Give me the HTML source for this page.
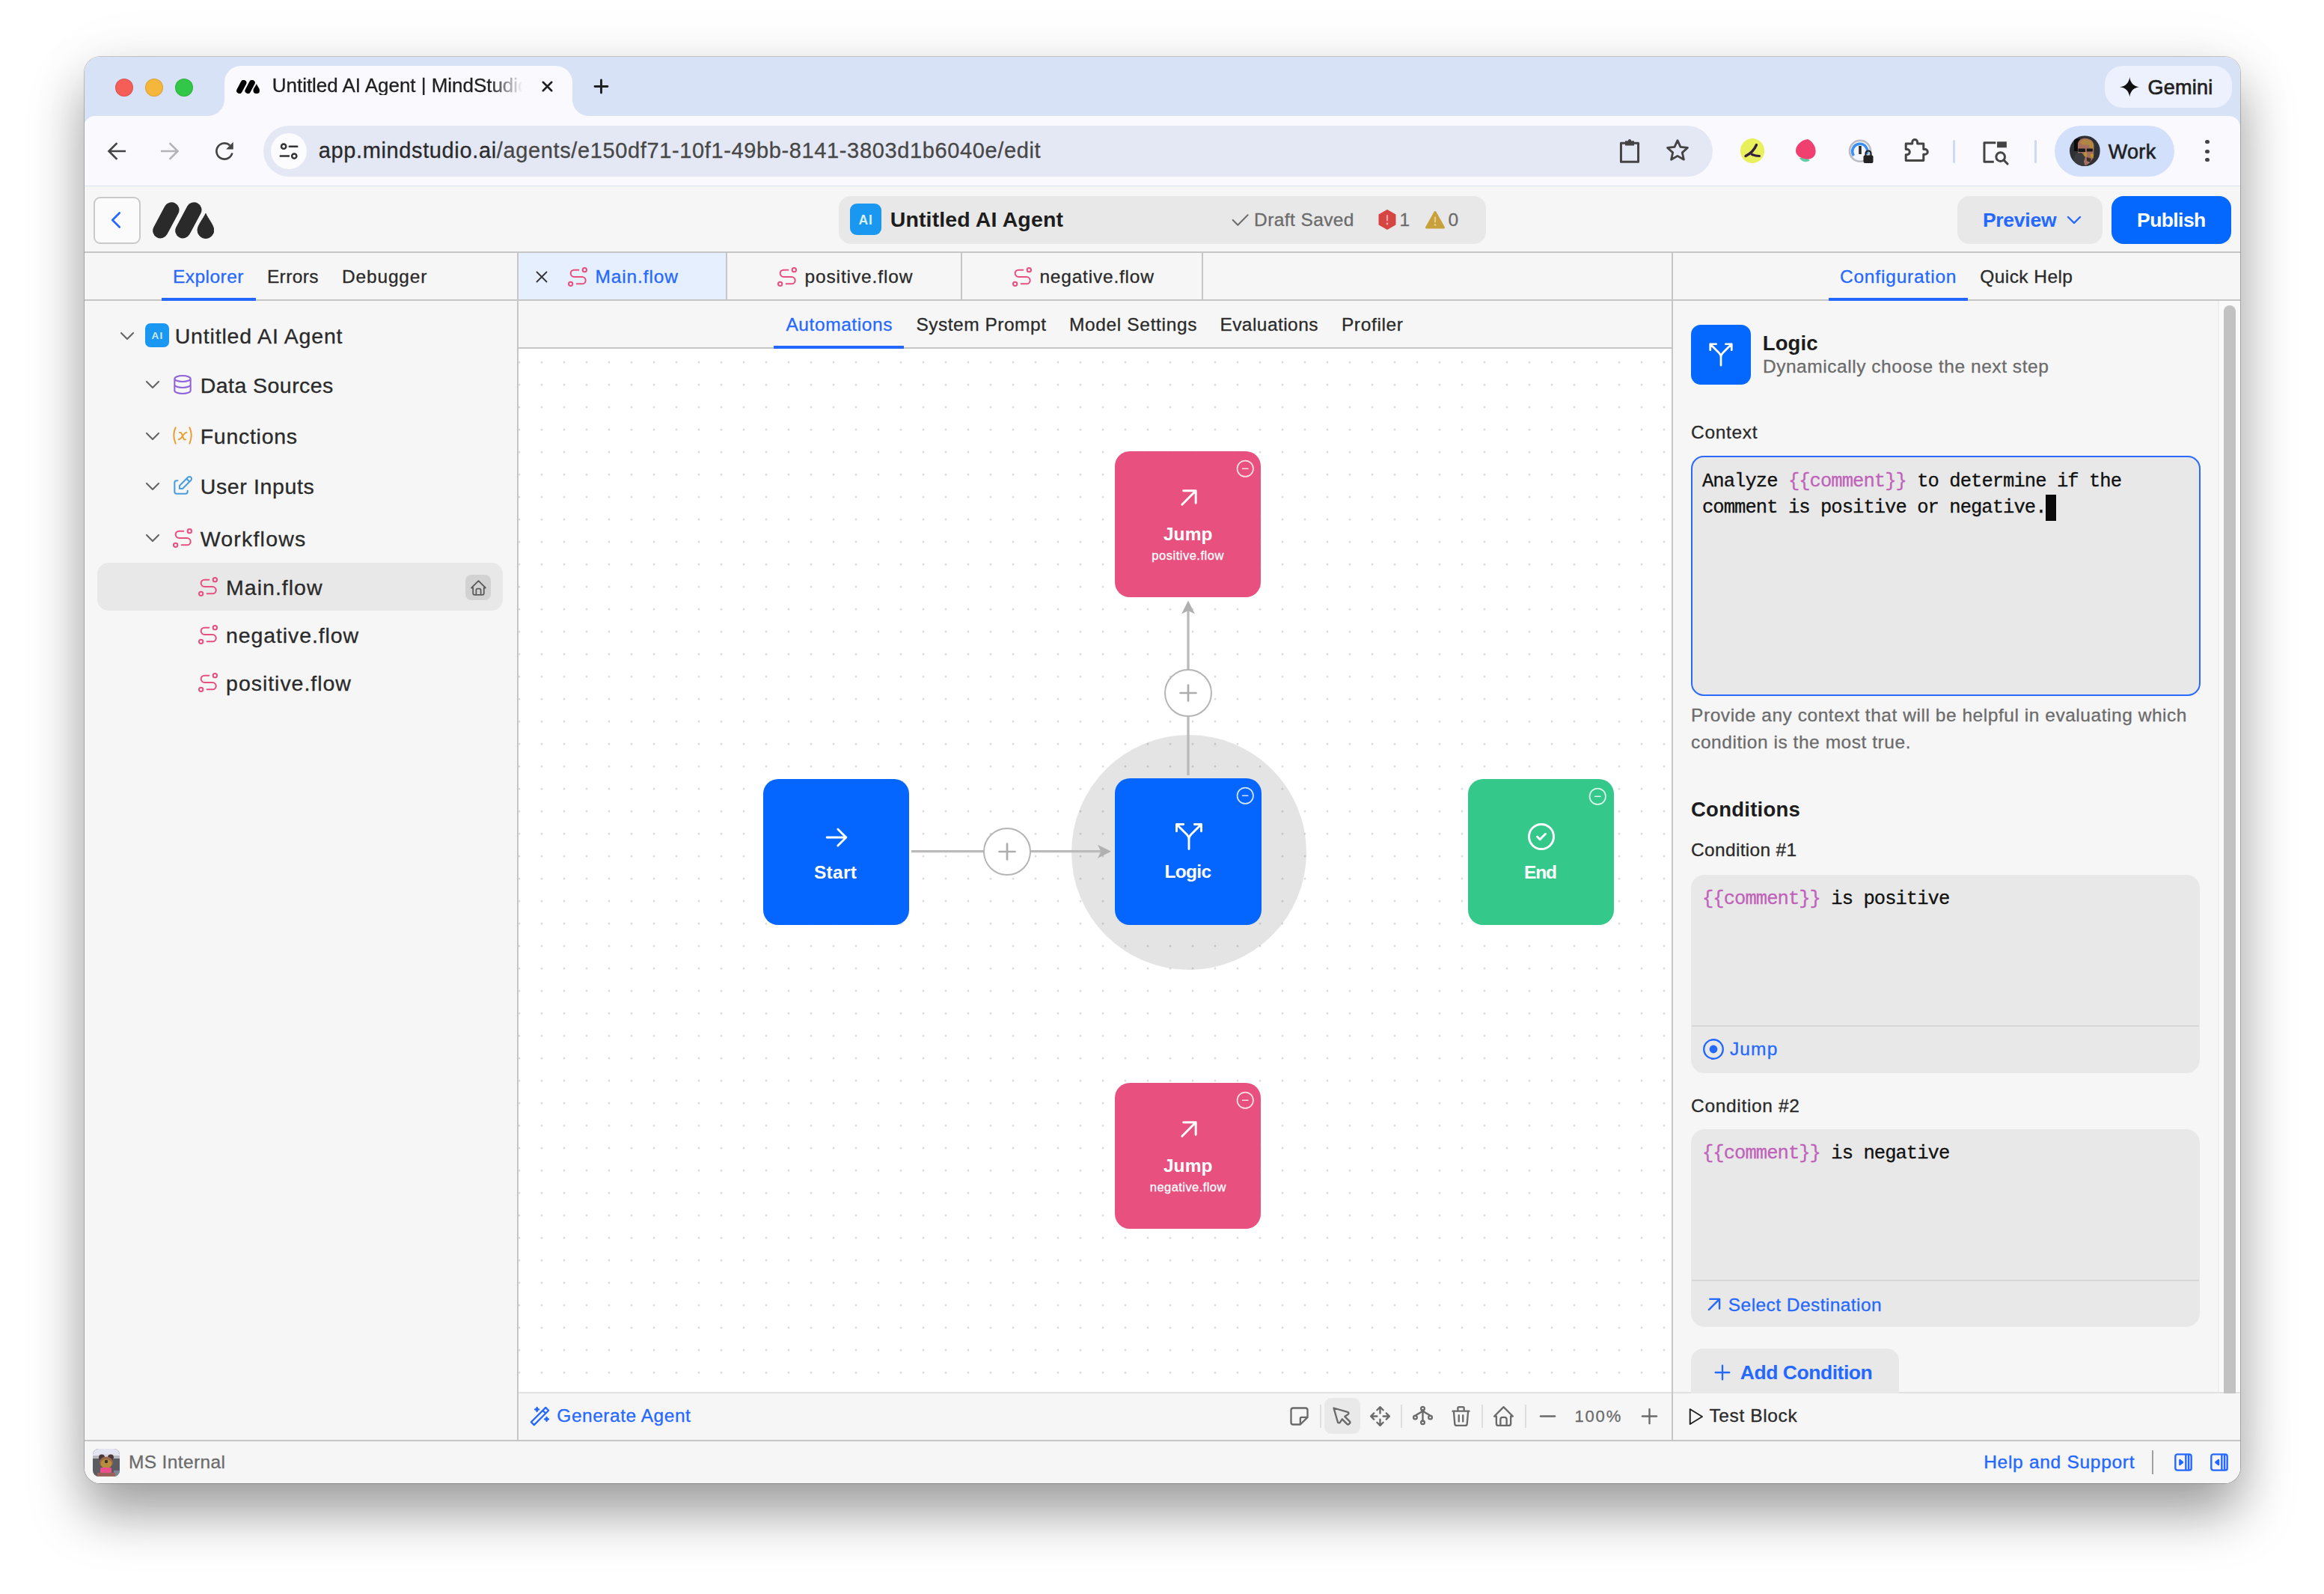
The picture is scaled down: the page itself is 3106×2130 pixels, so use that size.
<!DOCTYPE html>
<html lang="en">
<head>
<meta charset="utf-8">
<title>Untitled AI Agent | MindStudio</title>
<style>
html,body{margin:0;padding:0;}
body{width:3106px;height:2130px;background:#fff;overflow:hidden;position:relative;font-family:"Liberation Sans",sans-serif;}
#shadow{position:absolute;left:113px;top:76px;width:2881px;height:1906px;border-radius:21px;
 box-shadow:0 0 0 1px rgba(0,0,0,.2),0 40px 70px rgba(0,0,0,.37),0 0 90px rgba(0,0,0,.05);}
#win{position:absolute;left:113px;top:76px;width:2881px;height:1906px;border-radius:21px;overflow:hidden;background:#f6f6f6;}
#pg{position:absolute;left:-113px;top:-76px;width:3106px;height:2130px;}
.t{position:absolute;white-space:nowrap;line-height:1;-webkit-text-stroke:.3px;}
.b{position:absolute;box-sizing:border-box;}
.i{position:absolute;overflow:visible;stroke:currentColor;stroke-linecap:round;stroke-linejoin:round;}
.v{color:#c062ba;}
</style>
</head>
<body>
<svg width="0" height="0" style="position:absolute">
<defs>
<symbol id="chev-d" viewBox="0 0 24 24"><path d="M6 9l6 6l6 -6"/></symbol>
<symbol id="chev-l" viewBox="0 0 24 24"><path d="M15 6l-6 6l6 6"/></symbol>
<symbol id="x" viewBox="0 0 24 24"><path d="M18 6l-12 12M6 6l12 12"/></symbol>
<symbol id="plus" viewBox="0 0 24 24"><path d="M12 5v14M5 12h14"/></symbol>
<symbol id="minus" viewBox="0 0 24 24"><path d="M5 12h14"/></symbol>
<symbol id="check" viewBox="0 0 24 24"><path d="M5 12l5 5l10 -10"/></symbol>
<symbol id="arrow-r" viewBox="0 0 24 24"><path d="M5 12h14M13 18l6 -6M13 6l6 6"/></symbol>
<symbol id="arrow-l" viewBox="0 0 24 24"><path d="M19 12h-14M11 18l-6 -6M11 6l-6 6"/></symbol>
<symbol id="arrow-ur" viewBox="0 0 24 24"><path d="M17 7l-10 10M8 7h9v9"/></symbol>
<symbol id="fork" viewBox="0 0 24 24"><path d="M16 3h5v5M8 3h-5v5M21 3l-7.536 7.536a5 5 0 0 0 -1.464 3.534v6.93M3 3l7.536 7.536a5 5 0 0 1 1.464 3.534v.93"/></symbol>
<symbol id="c-check" viewBox="0 0 24 24"><circle cx="12" cy="12" r="9"/><path d="M9 12l2 2l4 -4"/></symbol>
<symbol id="c-minus" viewBox="0 0 24 24"><circle cx="12" cy="12" r="9"/><path d="M9 12h6"/></symbol>
<symbol id="c-dot" viewBox="0 0 24 24"><circle cx="12" cy="12" r="9"/><circle cx="12" cy="12" r="3.800" fill="currentColor" stroke="none"/></symbol>
<symbol id="db" viewBox="0 0 24 24"><path d="M4 6a8 3 0 1 0 16 0a8 3 0 1 0 -16 0M4 6v6a8 3 0 0 0 16 0v-6M4 12v6a8 3 0 0 0 16 0v-6"/></symbol>
<symbol id="var" viewBox="0 0 24 24"><path d="M5 4c-2.500 5 -2.500 10 0 16m14 -16c2.500 5 2.500 10 0 16m-10 -11h1c1 0 1 1 2.016 3.527c.984 2.473 .984 3.473 1.984 3.473h1M8 16c1.500 0 3 -2 4 -3.500s2.500 -3.500 4 -3.500"/></symbol>
<symbol id="edit" viewBox="0 0 24 24"><path d="M7 7h-1a2 2 0 0 0 -2 2v9a2 2 0 0 0 2 2h9a2 2 0 0 0 2 -2v-1M20.385 6.585a2.100 2.100 0 0 0 -2.970 -2.970l-8.415 8.385v3h3l8.385 -8.415zM16 5l3 3"/></symbol>
<symbol id="route" viewBox="0 0 24 24"><path d="M3 19a2 2 0 1 0 4 0a2 2 0 0 0 -4 0M19 7a2 2 0 1 0 0 -4a2 2 0 0 0 0 4zM11 19h5.500a3.500 3.500 0 0 0 0 -7h-8a3.500 3.500 0 0 1 0 -7h4.500"/></symbol>
<symbol id="home" viewBox="0 0 24 24"><path d="M5 12l-2 0l9 -9l9 9l-2 0M5 12v7a2 2 0 0 0 2 2h10a2 2 0 0 0 2 -2v-7M9 21v-6a2 2 0 0 1 2 -2h2a2 2 0 0 1 2 2v6"/></symbol>
<symbol id="trash" viewBox="0 0 24 24"><path d="M4 7l16 0M10 11l0 6M14 11l0 6M5 7l1 12a2 2 0 0 0 2 2h8a2 2 0 0 0 2 -2l1 -12M9 7v-3a1 1 0 0 1 1 -1h4a1 1 0 0 1 1 1v3"/></symbol>
<symbol id="pointer" viewBox="0 0 24 24"><path d="M7.904 17.563a1.200 1.200 0 0 0 2.228 .308l2.090 -3.093l4.907 4.907a1.067 1.067 0 0 0 1.509 0l1.047 -1.047a1.067 1.067 0 0 0 0 -1.509l-4.907 -4.907l3.113 -2.090a1.200 1.200 0 0 0 -.309 -2.228l-13.582 -3.904l3.904 13.563z"/></symbol>
<symbol id="move" viewBox="0 0 24 24"><path d="M18 9l3 3l-3 3M15 12h6M6 9l-3 3l3 3M3 12h6M9 18l3 3l3 -3M12 15v6M15 6l-3 -3l-3 3M12 3v6"/></symbol>
<symbol id="wand" viewBox="0 0 24 24"><path d="M6 21l15 -15l-3 -3l-15 15l3 3M15 6l3 3M9 3a2 2 0 0 0 2 2a2 2 0 0 0 -2 2a2 2 0 0 0 -2 -2a2 2 0 0 0 2 -2M19 13a2 2 0 0 0 2 2a2 2 0 0 0 -2 2a2 2 0 0 0 -2 -2a2 2 0 0 0 2 -2"/></symbol>
<symbol id="play" viewBox="0 0 24 24"><path d="M7 4v16l13 -8z"/></symbol>
<symbol id="note" viewBox="0 0 24 24"><path d="M13 20l7 -7M13 20v-6a1 1 0 0 1 1 -1h6v-7a2 2 0 0 0 -2 -2h-12a2 2 0 0 0 -2 2v12a2 2 0 0 0 2 2h7"/></symbol>
<symbol id="tree" viewBox="0 0 24 24"><circle cx="12" cy="5.200" r="1.700"/><circle cx="12" cy="18.800" r="1.700"/><circle cx="4.700" cy="13.800" r="1.700"/><circle cx="19.300" cy="13.800" r="1.700"/><path d="M12 6.900v10.200M11.700 6.900c-.8 3.400 -5.600 2.800 -6.600 5.300M12.300 6.900c.8 3.400 5.600 2.800 6.600 5.300"/></symbol>
<symbol id="sb-r1" viewBox="0 0 24 24"><path d="M4 6a2 2 0 0 1 2 -2h12a2 2 0 0 1 2 2v12a2 2 0 0 1 -2 2h-12a2 2 0 0 1 -2 -2zM14.500 4v16M17.300 4v16"/><path d="M8.500 9.800l2.800 2.200l-2.800 2.200z" fill="currentColor"/></symbol>
<symbol id="sb-r2" viewBox="0 0 24 24"><path d="M4 6a2 2 0 0 1 2 -2h12a2 2 0 0 1 2 2v12a2 2 0 0 1 -2 2h-12a2 2 0 0 1 -2 -2zM14.500 4v16M17.300 4v16"/><path d="M11.300 9.800l-2.800 2.200l2.800 2.200z" fill="currentColor"/></symbol>
<symbol id="reload" viewBox="0 0 24 24"><path d="M19.300 13.800a7.500 7.500 0 1 1 -2.200 -7.300" stroke-linecap="butt"/><path d="M20.300 3.400v6.800h-6.800z" fill="currentColor" stroke="none"/></symbol>
<symbol id="tune" viewBox="0 0 24 24"><path d="M12.600 6.900h8.400M3 17.200h9"/><circle cx="6.500" cy="6.900" r="2.500"/><circle cx="17.800" cy="17.200" r="2.500"/></symbol>
<symbol id="nav-l" viewBox="0 0 24 24"><path d="M20.500 12h-15.500M12.300 4.300l-7.700 7.700l7.700 7.700" stroke-linecap="butt" stroke-linejoin="miter"/></symbol>
<symbol id="nav-r" viewBox="0 0 24 24"><path d="M3.500 12h15.500M11.700 4.300l7.700 7.700l-7.700 7.700" stroke-linecap="butt" stroke-linejoin="miter"/></symbol>
<symbol id="clip" viewBox="0 0 24 24"><path d="M8 4.800h-3.700v16.700h15.400v-16.700h-3.700" stroke-linecap="butt" stroke-linejoin="round"/><path d="M8 2.800h8v4.200h-8z" fill="currentColor" stroke="none"/><circle cx="12" cy="2.700" r="1.400" fill="currentColor" stroke="none"/></symbol>
<symbol id="star" viewBox="0 0 24 24"><path d="M12 3.600l2.500 5.500l6 .65l-4.500 4.050l1.300 5.900l-5.300 -3.050l-5.300 3.050l1.300 -5.900l-4.500 -4.050l6 -.65z"/></symbol>
<symbol id="puzzle" viewBox="0 0 24 24"><path d="M4.800 7h5v-1.200a2 2 0 0 1 4 0v1.200h4.800v4.400h1.200a2 2 0 0 1 0 4h-1.200v4.800h-13.800v-4.600h.9a2.100 2.100 0 0 0 0 -4.200h-.9z" stroke-linejoin="round"/></symbol>
<symbol id="media" viewBox="0 0 24 24"><path d="M11 19.500h-7.500v-15h9" stroke-linecap="butt" stroke-linejoin="round"/><path d="M13.500 3.700h7.500v4.600h-7.500z" fill="currentColor" stroke="none"/><circle cx="16.200" cy="15.600" r="3.400"/><path d="M18.700 18.100l3 3"/></symbol>
<symbol id="logo" viewBox="0 0 82 49"><path d="M10.400 38.300l14.900 -27.900M40.400 38.300l14.900 -27.900" stroke="currentColor" stroke-width="20.400" stroke-linecap="round" fill="none"/><path d="M70.900 15.300c-2.600 6.400 -10.900 15.500 -10.900 22.300a10.900 10.900 0 0 0 21.800 0c0 -6.800 -8.300 -15.900 -10.900 -22.300z" fill="currentColor" stroke="currentColor" stroke-width="1" stroke-linejoin="round"/></symbol>
</defs>
</svg>
<div id="shadow"></div>
<div id="win"><div id="pg">
<div class="b" style="left:112.0px;top:75.0px;width:2882.0px;height:105.0px;background:#d8e2f6;"></div>
<div class="b" style="left:153.8px;top:104.6px;width:24.4px;height:24.4px;border-radius:50%;background:#f55d57;box-shadow:inset 0 0 0 1px rgba(0,0,0,.12);"></div>
<div class="b" style="left:193.8px;top:104.6px;width:24.4px;height:24.4px;border-radius:50%;background:#f5b63c;box-shadow:inset 0 0 0 1px rgba(0,0,0,.12);"></div>
<div class="b" style="left:233.8px;top:104.6px;width:24.4px;height:24.4px;border-radius:50%;background:#33c748;box-shadow:inset 0 0 0 1px rgba(0,0,0,.12);"></div>
<div class="b" style="left:112.0px;top:155.0px;width:2882.0px;height:95.0px;background:#f9f9fe;border-radius:15px 15px 0 0;border-bottom:2px solid #dfe3f0;"></div>
<div class="b" style="left:300.0px;top:88.0px;width:465.0px;height:69.0px;background:#f9f9fe;border-radius:22px 22px 0 0;"></div>
<svg class="b" style="left:278px;top:133px;width:22px;height:22px" viewBox="0 0 22 22"><path d="M22 0v22h-22a22 22 0 0 0 22 -22z" fill="#f9f9fe"/></svg>
<svg class="b" style="left:765px;top:133px;width:22px;height:22px" viewBox="0 0 22 22"><path d="M0 0v22h22a22 22 0 0 1 -22 -22z" fill="#f9f9fe"/></svg>
<svg class="b" style="left:316px;top:106px;width:31px;height:20px" viewBox="0 0 82 49"><use href="#logo"/></svg>
<span class="t" id="tabtitle" style="left:363.8px;top:101px;font-size:26px;color:#1f1f1f;letter-spacing:-0.029px;width:338px;overflow:hidden;-webkit-mask-image:linear-gradient(90deg,#000 86%,transparent 99%);mask-image:linear-gradient(90deg,#000 86%,transparent 99%);">Untitled AI Agent | MindStudio</span>
<svg class="i" style="left:720.2px;top:104.0px;width:23px;height:23px;color:#1f1f1f;stroke-width:2.7;fill:none;"><use href="#x"/></svg>
<svg class="i" style="left:788.8px;top:101.0px;width:29px;height:29px;color:#1f1f1f;stroke-width:2.4;fill:none;"><use href="#plus"/></svg>
<div class="b" style="left:2813.4px;top:87.7px;width:169.6px;height:56.3px;background:#edf1fd;border-radius:24px;"></div>
<svg class="b" style="left:2832.700px;top:102.900px;width:26.500px;height:26.500px" viewBox="0 0 24 24"><path d="M12 0c.7 6.600 4.700 11.300 12 12c-7.300 .7 -11.300 5.400 -12 12c-.7 -6.600 -4.700 -11.300 -12 -12c7.300 -.7 11.300 -5.400 12 -12z" fill="#111"/></svg>
<span class="t" id="gemini" style="left:2870.4px;top:104px;font-size:27px;color:#1f1f1f;letter-spacing:0.245px;-webkit-text-stroke:.7px #1f1f1f;">Gemini</span>
<svg class="i" style="left:139.0px;top:185.2px;width:34px;height:34px;color:#444;stroke-width:1.9;fill:none;"><use href="#nav-l"/></svg>
<svg class="i" style="left:210.4px;top:185.2px;width:34px;height:34px;color:#b3b3b8;stroke-width:1.9;fill:none;"><use href="#nav-r"/></svg>
<svg class="i" style="left:283.3px;top:185.2px;width:34px;height:34px;color:#444;stroke-width:1.9;fill:none;"><use href="#reload"/></svg>
<div class="b" style="left:352.3px;top:168.2px;width:1936.7px;height:67.4px;background:#e4e7f4;border-radius:34px;"></div>
<div class="b" style="left:361.7px;top:178.0px;width:48.0px;height:48.0px;background:#fcfcff;border-radius:50%;"></div>
<svg class="i" style="left:370.5px;top:187.0px;width:30px;height:30px;color:#333;stroke-width:2;fill:none;"><use href="#tune"/></svg>
<span class="t" id="url" style="left:425.7px;top:187px;font-size:29px;color:#2a2a2a;letter-spacing:0.630px;">app.mindstudio.ai<span style="color:#474747">/agents/e150df71-10f1-49bb-8141-3803d1b6040e/edit</span></span>
<svg class="i" style="left:2159.9px;top:184.3px;width:36px;height:36px;color:#444;stroke-width:2;fill:none;"><use href="#clip"/></svg>
<svg class="i" style="left:2223.0px;top:182.2px;width:38px;height:38px;color:#444;stroke-width:1.8;fill:none;"><use href="#star"/></svg>
<div class="b" style="left:2325.7px;top:185.4px;width:32.7px;height:32.7px;background:#e8f05c;border-radius:50%;"></div>
<svg class="b" style="left:2326px;top:186px;width:32px;height:32px" viewBox="0 0 32 32"><path d="M21.500 7.500c-3 7 -8 12 -14.500 15" stroke="#33203f" stroke-width="3.400" fill="none" stroke-linecap="round"/><path d="M15.500 20.500c3.500 1.500 7 2 10 2" stroke="#33203f" stroke-width="3" fill="none" stroke-linecap="round"/></svg>
<svg class="b" style="left:2397px;top:184px;width:32px;height:36px" viewBox="0 0 32 36"><path d="M8 27.500c3 5 10 6 13.500 3c-2 -3.500 -9 -5 -13.500 -3z" fill="#5fd0a5"/><path d="M19 2c7 3 11.500 11 10.500 18c-.8 6 -6 9.500 -12.500 8.500c-8 -1 -14 -5 -14 -11c0 -7 7 -14.500 16 -15.500z" fill="#f04070"/></svg>
<svg class="b" style="left:2468px;top:183px;width:40px;height:40px" viewBox="0 0 40 40"><circle cx="18" cy="18.700" r="14" fill="#f4f6fd" stroke="#b9bcc4" stroke-width="2.600"/><path d="M9.500 25a10 10 0 1 1 17.500 -2" stroke="#3b8ff0" stroke-width="3.600" fill="none"/><path d="M18 12v11" stroke="#2a2a2a" stroke-width="3.600"/><rect x="22.500" y="24.500" width="13" height="10.500" rx="2" fill="#222"/><path d="M25.500 25v-3a3.500 3.500 0 0 1 7 0v3" stroke="#222" stroke-width="2.200" fill="none"/></svg>
<svg class="i" style="left:2539.3px;top:180.1px;width:41px;height:41px;color:#444;stroke-width:1.75;fill:none;"><use href="#puzzle"/></svg>
<div class="b" style="left:2610.3px;top:186.5px;width:3.0px;height:31.2px;background:#cdd9f7;border-radius:1.500px;"></div>
<svg class="i" style="left:2646.0px;top:182.5px;width:41px;height:41px;color:#444;stroke-width:1.75;fill:none;"><use href="#media"/></svg>
<div class="b" style="left:2718.5px;top:186.5px;width:3.0px;height:31.2px;background:#cdd9f7;border-radius:1.500px;"></div>
<div class="b" style="left:2746.0px;top:167.8px;width:160.0px;height:68.0px;background:#d3e0fb;border-radius:34px;"></div>
<svg class="b" style="left:2765.800px;top:181.400px;width:40.800px;height:41.200px" viewBox="0 0 41 41"><defs><clipPath id="pfc"><circle cx="20.500" cy="20.500" r="20.500"/></clipPath></defs><g clip-path="url(#pfc)"><rect width="41" height="41" fill="#2e3033"/><path d="M6 4h8v17h-8z" fill="#0b0b0c"/><path d="M11 12c0 -6 5 -8.500 10 -8.500s11.500 3 11.500 9.500v11c0 6 -3 10 -6 13l-4.500 3h-7l-1 -9l-3 -7z" fill="#a66e5f"/><path d="M13.500 8l6 -3.500l9 2l4 5v7l-5 -1l-2 -5l-9.500 -.5z" fill="#b7962f" opacity=".6"/><path d="M11.500 17.500h9.500v4.500h-9.500zM23 17.500h8v4h-8z" fill="#17181a"/><path d="M19.500 22.500h3.500v6h-3.500zM28 24l4.500 1.500l-1 5.500l-3.500 -3z" fill="#b7962f"/><path d="M8 24l8 -1l5 6l-2 6l2 6h-12l-4 -9z" fill="#3a3b3e"/><path d="M23 29l6 2l-1 5l-5 -2z" fill="#3b3030"/></g></svg>
<span class="t" id="work" style="left:2817.7px;top:190px;font-size:27px;color:#1f1f1f;letter-spacing:0.313px;-webkit-text-stroke:.6px #1f1f1f;">Work</span>
<div class="b" style="left:2947.3px;top:186.9px;width:5.4px;height:5.4px;background:#444;border-radius:50%;"></div>
<div class="b" style="left:2947.3px;top:199.5px;width:5.4px;height:5.4px;background:#444;border-radius:50%;"></div>
<div class="b" style="left:2947.3px;top:210.7px;width:5.4px;height:5.4px;background:#444;border-radius:50%;"></div>
<div class="b" style="left:112.0px;top:249.0px;width:2882.0px;height:1733.0px;background:#f6f6f6;"></div>
<div class="b" style="left:124.5px;top:262.5px;width:63.0px;height:63.0px;background:#fbfbfb;border:2px solid #c9c9c9;border-radius:9px;"></div>
<svg class="i" style="left:136.0px;top:275.0px;width:38px;height:38px;color:#2468ff;stroke-width:1.7;fill:none;"><use href="#chev-l"/></svg>
<svg class="b" style="left:204px;top:269.500px;width:82px;height:49px;color:#2a2a2a" viewBox="0 0 82 49"><use href="#logo"/></svg>
<div class="b" style="left:1120.6px;top:262.0px;width:865.4px;height:64.0px;background:#e8e8e8;border-radius:16px;"></div>
<div class="b" style="left:1136.0px;top:272.0px;width:42.2px;height:42.0px;background:#1a97f0;border-radius:9px;"></div>
<span class="t" id="ai1" style="left:1147.5px;top:286px;font-size:17.5px;font-weight:700;-webkit-text-stroke:0;color:#d9f0ff;letter-spacing:0.937px;">AI</span>
<span class="t" id="title" style="left:1189.7px;top:279px;font-size:28.5px;font-weight:700;-webkit-text-stroke:0;color:#1d1d1d;letter-spacing:0.139px;">Untitled AI Agent</span>
<svg class="i" style="left:1640.8px;top:277.8px;width:32px;height:32px;color:#6e6e6e;stroke-width:1.55;fill:none;"><use href="#check"/></svg>
<span class="t" id="draft" style="left:1676.1px;top:282px;font-size:24.5px;color:#6b6b6b;letter-spacing:0.402px;">Draft Saved</span>
<svg class="b" style="left:1841px;top:280px;width:26px;height:27px" viewBox="0 0 26 27"><path d="M13 1l10.500 6v13l-10.500 6l-10.500 -6v-13z" fill="#d64541" stroke="#d64541" stroke-width="2" stroke-linejoin="round"/><path d="M13 8v6.500" stroke="#f3a5a5" stroke-width="2.200" stroke-linecap="round"/><circle cx="13" cy="19" r="1.400" fill="#f3a5a5"/></svg>
<span class="t" id="errn" style="left:1870.4px;top:282px;font-size:24.5px;color:#6b6b6b;letter-spacing:0.000px;">1</span>
<svg class="b" style="left:1903.800px;top:280.500px;width:28px;height:26px" viewBox="0 0 28 26"><path d="M14 2.500l11.500 20.500h-23z" fill="#c8a03c" stroke="#c8a03c" stroke-width="3" stroke-linejoin="round"/><path d="M14 9.500v6" stroke="#e6cf8a" stroke-width="2.200" stroke-linecap="round"/><circle cx="14" cy="19.600" r="1.400" fill="#e6cf8a"/></svg>
<span class="t" id="warnn" style="left:1935.4px;top:282px;font-size:24.5px;color:#6b6b6b;letter-spacing:0.000px;">0</span>
<div class="b" style="left:2616.0px;top:262.0px;width:194.0px;height:64.0px;background:#e8e8e8;border-radius:16px;"></div>
<span class="t" id="preview" style="left:2649.9px;top:281px;font-size:26.5px;font-weight:700;-webkit-text-stroke:0;color:#2468ff;letter-spacing:-0.261px;">Preview</span>
<svg class="i" style="left:2756.1px;top:277.8px;width:32px;height:32px;color:#2468ff;stroke-width:1.8;fill:none;"><use href="#chev-d"/></svg>
<div class="b" style="left:2822.0px;top:262.0px;width:160.4px;height:64.0px;background:#0468ff;border-radius:16px;"></div>
<span class="t" id="publish" style="left:2856.1px;top:281px;font-size:26.5px;font-weight:700;-webkit-text-stroke:0;color:#fff;letter-spacing:-0.597px;">Publish</span>
<div class="b" style="left:112.0px;top:335.6px;width:2882.0px;height:2.0px;background:#c6c6c6;"></div>
<div class="b" style="left:112.0px;top:400.0px;width:2882.0px;height:2.0px;background:#c6c6c6;"></div>
<div class="b" style="left:692.0px;top:464.0px;width:1543.0px;height:2.0px;background:#c6c6c6;"></div>
<div class="b" style="left:692.0px;top:1859.8px;width:2302.0px;height:2.2px;background:#e1e1e1;"></div>
<div class="b" style="left:112.0px;top:1923.5px;width:2882.0px;height:2.0px;background:#c6c6c6;"></div>
<div class="b" style="left:690.5px;top:337.0px;width:2.0px;height:1587.0px;background:#c6c6c6;"></div>
<div class="b" style="left:2234.0px;top:337.0px;width:2.0px;height:1587.0px;background:#c6c6c6;"></div>
<span class="t" id="explorer" style="left:230.9px;top:358px;font-size:24.5px;color:#2468ff;letter-spacing:0.480px;">Explorer</span>
<div class="b" style="left:216.0px;top:397.5px;width:126.0px;height:4.0px;background:#2468ff;"></div>
<span class="t" id="errors" style="left:356.9px;top:358px;font-size:24.5px;color:#2a2a2a;letter-spacing:0.378px;">Errors</span>
<span class="t" id="debugger" style="left:456.9px;top:358px;font-size:24.5px;color:#2a2a2a;letter-spacing:0.855px;">Debugger</span>
<div class="b" style="left:692.5px;top:337.5px;width:278.5px;height:62.5px;background:#e6effd;"></div>
<div class="b" style="left:970.0px;top:337.5px;width:2.0px;height:62.5px;background:#c6c6c6;"></div>
<div class="b" style="left:1283.5px;top:337.5px;width:2.0px;height:62.5px;background:#c6c6c6;"></div>
<div class="b" style="left:1606.0px;top:337.5px;width:2.0px;height:62.5px;background:#c6c6c6;"></div>
<svg class="i" style="left:711.0px;top:357.0px;width:26px;height:26px;color:#333;stroke-width:1.7;fill:none;"><use href="#x"/></svg>
<svg class="i" style="left:755.8px;top:353.8px;width:32px;height:32px;color:#e8507f;stroke-width:1.55;fill:none;"><use href="#route"/></svg>
<span class="t" id="tab_main" style="left:795.4px;top:358px;font-size:24.5px;color:#2468ff;letter-spacing:0.889px;">Main.flow</span>
<svg class="i" style="left:1035.6px;top:353.8px;width:32px;height:32px;color:#e8507f;stroke-width:1.55;fill:none;"><use href="#route"/></svg>
<span class="t" id="tab_pos" style="left:1075.4px;top:358px;font-size:24.5px;color:#2a2a2a;letter-spacing:0.887px;">positive.flow</span>
<svg class="i" style="left:1350.0px;top:353.8px;width:32px;height:32px;color:#e8507f;stroke-width:1.55;fill:none;"><use href="#route"/></svg>
<span class="t" id="tab_neg" style="left:1389.4px;top:358px;font-size:24.5px;color:#2a2a2a;letter-spacing:0.798px;">negative.flow</span>
<span class="t" id="config" style="left:2458.9px;top:358px;font-size:24.5px;color:#2468ff;letter-spacing:0.822px;">Configuration</span>
<div class="b" style="left:2444.0px;top:397.5px;width:186.0px;height:4.0px;background:#2468ff;"></div>
<span class="t" id="qhelp" style="left:2646.2px;top:358px;font-size:24.5px;color:#2a2a2a;letter-spacing:0.440px;">Quick Help</span>
<span class="t" id="automations" style="left:1050.4px;top:422px;font-size:24.5px;color:#2468ff;letter-spacing:0.591px;">Automations</span>
<div class="b" style="left:1034.0px;top:461.5px;width:174.0px;height:4.0px;background:#2468ff;"></div>
<span class="t" id="sysprompt" style="left:1224.4px;top:422px;font-size:24.5px;color:#2a2a2a;letter-spacing:0.510px;">System Prompt</span>
<span class="t" id="modelset" style="left:1428.9px;top:422px;font-size:24.5px;color:#2a2a2a;letter-spacing:0.656px;">Model Settings</span>
<span class="t" id="evals" style="left:1630.4px;top:422px;font-size:24.5px;color:#2a2a2a;letter-spacing:0.442px;">Evaluations</span>
<span class="t" id="profiler" style="left:1792.9px;top:422px;font-size:24.5px;color:#2a2a2a;letter-spacing:0.640px;">Profiler</span>
<svg class="i" style="left:154.0px;top:432.5px;width:32px;height:32px;color:#666;stroke-width:1.6;fill:none;"><use href="#chev-d"/></svg>
<div class="b" style="left:194.2px;top:432.0px;width:31.8px;height:32.0px;background:#1a97f0;border-radius:7px;"></div>
<span class="t" id="ai2" style="left:202.4px;top:442px;font-size:13.5px;font-weight:700;-webkit-text-stroke:0;color:#cfeaff;letter-spacing:1.377px;">AI</span>
<span class="t" id="tr_root" style="left:233.7px;top:435px;font-size:28.5px;color:#2a2a2a;letter-spacing:0.820px;">Untitled AI Agent</span>
<svg class="i" style="left:187.6px;top:498.4px;width:32px;height:32px;color:#666;stroke-width:1.6;fill:none;"><use href="#chev-d"/></svg>
<svg class="i" style="left:228.3px;top:497.8px;width:32px;height:32px;color:#8f63d9;stroke-width:1.55;fill:none;"><use href="#db"/></svg>
<span class="t" id="tr_ds" style="left:267.7px;top:501px;font-size:28.5px;color:#2a2a2a;letter-spacing:0.453px;">Data Sources</span>
<svg class="i" style="left:187.6px;top:566.7px;width:32px;height:32px;color:#666;stroke-width:1.6;fill:none;"><use href="#chev-d"/></svg>
<svg class="i" style="left:228.3px;top:566.1px;width:32px;height:32px;color:#e9a23b;stroke-width:1.55;fill:none;"><use href="#var"/></svg>
<span class="t" id="tr_fn" style="left:267.7px;top:569px;font-size:28.5px;color:#2a2a2a;letter-spacing:0.724px;">Functions</span>
<svg class="i" style="left:187.6px;top:634.0px;width:32px;height:32px;color:#666;stroke-width:1.6;fill:none;"><use href="#chev-d"/></svg>
<svg class="i" style="left:228.3px;top:633.4px;width:32px;height:32px;color:#4a9ede;stroke-width:1.55;fill:none;"><use href="#edit"/></svg>
<span class="t" id="tr_ui" style="left:267.7px;top:636px;font-size:28.5px;color:#2a2a2a;letter-spacing:0.642px;">User Inputs</span>
<svg class="i" style="left:187.6px;top:703.2px;width:32px;height:32px;color:#666;stroke-width:1.6;fill:none;"><use href="#chev-d"/></svg>
<svg class="i" style="left:228.3px;top:702.6px;width:32px;height:32px;color:#e8507f;stroke-width:1.55;fill:none;"><use href="#route"/></svg>
<span class="t" id="tr_wf" style="left:267.7px;top:706px;font-size:28.5px;color:#2a2a2a;letter-spacing:1.204px;">Workflows</span>
<div class="b" style="left:130.0px;top:751.5px;width:542.3px;height:64.5px;background:#e8e8e8;border-radius:15px;"></div>
<div class="b" style="left:622.0px;top:768.0px;width:34.0px;height:34.0px;background:#d2d2d2;border-radius:8px;"></div>
<svg class="i" style="left:626.5px;top:772.5px;width:25px;height:25px;color:#5a5a5a;stroke-width:1.7;fill:none;"><use href="#home"/></svg>
<svg class="i" style="left:262.1px;top:768.2px;width:32px;height:32px;color:#e8507f;stroke-width:1.55;fill:none;"><use href="#route"/></svg>
<span class="t" id="tr_main" style="left:302.1px;top:771px;font-size:28.5px;color:#2a2a2a;letter-spacing:1.010px;">Main.flow</span>
<svg class="i" style="left:262.1px;top:831.9px;width:32px;height:32px;color:#e8507f;stroke-width:1.55;fill:none;"><use href="#route"/></svg>
<span class="t" id="tr_neg" style="left:302.1px;top:835px;font-size:28.5px;color:#2a2a2a;letter-spacing:0.883px;">negative.flow</span>
<svg class="i" style="left:262.1px;top:895.8px;width:32px;height:32px;color:#e8507f;stroke-width:1.55;fill:none;"><use href="#route"/></svg>
<span class="t" id="tr_pos" style="left:302.1px;top:899px;font-size:28.5px;color:#2a2a2a;letter-spacing:0.960px;">positive.flow</span>
<svg class="b" style="left:124px;top:1935.500px;width:36px;height:37px" viewBox="0 0 36 37"><defs><clipPath id="avc"><rect x="0" y="0" width="36" height="37" rx="8"/></clipPath></defs><g clip-path="url(#avc)"><rect width="36" height="37" fill="#5b5c61"/><rect width="36" height="9" fill="#e3e5f2"/><rect y="9" width="36" height="4" fill="#b9b9c4"/><rect x="9" y="7" width="19" height="7" fill="#d9d5e2"/><rect x="28" y="29" width="8" height="8" fill="#7f8595"/><circle cx="12" cy="11.500" r="4" fill="#4a3a36"/><circle cx="24" cy="11.500" r="4" fill="#4a3a36"/><ellipse cx="18" cy="18" rx="9" ry="7.500" fill="#9b6a4a"/><ellipse cx="18" cy="20" rx="7.500" ry="6" fill="#b98d3c"/><circle cx="18" cy="17" r="2.200" fill="#3c302c"/><rect x="10" y="25" width="15" height="8" rx="2" fill="#e9508c"/><rect x="6" y="32" width="24" height="5" fill="#9a6258"/></g></svg>
<span class="t" id="msint" style="left:171.9px;top:1942px;font-size:24.5px;color:#6b6b6b;letter-spacing:0.381px;">MS Internal</span>
<span class="t" id="helpsup" style="left:2651.2px;top:1942px;font-size:24.5px;color:#2468ff;letter-spacing:0.706px;-webkit-text-stroke:.4px #2468ff;">Help and Support</span>
<div class="b" style="left:2876.0px;top:1938.0px;width:2.0px;height:31.6px;background:#a0a0a0;"></div>
<svg class="i" style="left:2902.0px;top:1937.8px;width:32px;height:32px;color:#2468ff;stroke-width:1.8;fill:none;"><use href="#sb-r1"/></svg>
<svg class="i" style="left:2950.1px;top:1937.8px;width:32px;height:32px;color:#2468ff;stroke-width:1.8;fill:none;"><use href="#sb-r2"/></svg>
<div class="b" style="left:692.5px;top:466.0px;width:1541.5px;height:1393.8px;background-color:#fff;background-image:radial-gradient(circle at 2px 2px,#dadada 0,#dadada .9px,rgba(218,218,218,0) 1.800px);background-size:30px 30px;background-position:-1px 16.200px;"></div>
<div class="b" style="left:1431.5px;top:981.7px;width:314.0px;height:314.0px;border-radius:50%;background:rgba(0,0,0,.105);"></div>
<svg class="b" style="left:692px;top:466px;width:1542px;height:1394px" viewBox="692 466 1542 1394" fill="none"><path d="M1218 1137.700H1474" stroke="#bababa" stroke-width="3.300"/><path d="M1485 1137.700l-18 -9l4.500 9l-4.500 9z" fill="#b0b0b0"/><path d="M1588 1036V815" stroke="#bababa" stroke-width="3.300"/><path d="M1588 802.500l-9 18l9 -4.500l9 4.500z" fill="#b0b0b0"/></svg>
<div class="b" style="left:1314.1px;top:1105.7px;width:64.0px;height:64.0px;border-radius:50%;background:#fff;border:2px solid #b5b5b5;"></div>
<svg class="i" style="left:1328.1px;top:1119.7px;width:36px;height:36px;color:#adadad;stroke-width:1.8;fill:none;"><use href="#plus"/></svg>
<div class="b" style="left:1555.9px;top:893.9px;width:64.0px;height:64.0px;border-radius:50%;background:#fff;border:2px solid #b5b5b5;"></div>
<svg class="i" style="left:1569.9px;top:907.9px;width:36px;height:36px;color:#adadad;stroke-width:1.8;fill:none;"><use href="#plus"/></svg>
<div class="b" style="left:1490.0px;top:603.0px;width:195.3px;height:195.3px;background:#e8507f;border-radius:20px;"></div>
<svg class="i" style="left:1566.5px;top:643.0px;width:44px;height:44px;color:#fff;stroke-width:1.6;fill:none;"><use href="#arrow-ur"/></svg>
<span class="t" id="n_jump1" style="left:1554.9px;top:702px;font-size:24.5px;font-weight:700;-webkit-text-stroke:0;color:#fff;letter-spacing:0.083px;">Jump</span>
<span class="t" id="n_pos" style="left:1539.3px;top:734px;font-size:16.5px;color:#fff;letter-spacing:0.516px;">positive.flow</span>
<svg class="i" style="left:1649.5px;top:612.0px;width:28.5px;height:28.5px;color:rgba(255,255,255,.82);stroke-width:1.45;fill:none;"><use href="#c-minus"/></svg>
<div class="b" style="left:1019.5px;top:1041.0px;width:195.3px;height:195.3px;background:#0566ff;border-radius:20px;"></div>
<svg class="i" style="left:1095.7px;top:1096.6px;width:44px;height:44px;color:#fff;stroke-width:1.6;fill:none;"><use href="#arrow-r"/></svg>
<span class="t" id="n_start" style="left:1087.9px;top:1154px;font-size:24.5px;font-weight:700;-webkit-text-stroke:0;color:#fff;letter-spacing:0.316px;">Start</span>
<div class="b" style="left:1490.0px;top:1040.1px;width:196.2px;height:196.2px;background:#0566ff;border-radius:20px;"></div>
<svg class="i" style="left:1566.6px;top:1095.7px;width:44px;height:44px;color:#fff;stroke-width:1.6;fill:none;"><use href="#fork"/></svg>
<span class="t" id="n_logic" style="left:1556.6px;top:1153px;font-size:24.5px;font-weight:700;-webkit-text-stroke:0;color:#fff;letter-spacing:-0.713px;">Logic</span>
<svg class="i" style="left:1649.5px;top:1049.1px;width:28.5px;height:28.5px;color:rgba(255,255,255,.82);stroke-width:1.45;fill:none;"><use href="#c-minus"/></svg>
<div class="b" style="left:1961.8px;top:1040.8px;width:195.3px;height:195.3px;background:#34c98b;border-radius:20px;"></div>
<svg class="i" style="left:2037.9px;top:1096.4px;width:44px;height:44px;color:#fff;stroke-width:1.6;fill:none;"><use href="#c-check"/></svg>
<span class="t" id="n_end" style="left:2037.1px;top:1154px;font-size:24.5px;font-weight:700;-webkit-text-stroke:0;color:#fff;letter-spacing:-1.244px;">End</span>
<svg class="i" style="left:2121.3px;top:1049.8px;width:28.5px;height:28.5px;color:rgba(255,255,255,.82);stroke-width:1.45;fill:none;"><use href="#c-minus"/></svg>
<div class="b" style="left:1490.0px;top:1447.1px;width:195.3px;height:195.3px;background:#e8507f;border-radius:20px;"></div>
<svg class="i" style="left:1566.5px;top:1487.1px;width:44px;height:44px;color:#fff;stroke-width:1.6;fill:none;"><use href="#arrow-ur"/></svg>
<span class="t" id="n_jump2" style="left:1554.9px;top:1546px;font-size:24.5px;font-weight:700;-webkit-text-stroke:0;color:#fff;letter-spacing:0.083px;">Jump</span>
<span class="t" id="n_neg" style="left:1536.8px;top:1578px;font-size:16.5px;color:#fff;letter-spacing:0.438px;">negative.flow</span>
<svg class="i" style="left:1649.5px;top:1456.1px;width:28.5px;height:28.5px;color:rgba(255,255,255,.82);stroke-width:1.45;fill:none;"><use href="#c-minus"/></svg>
<svg class="i" style="left:705.7px;top:1877.4px;width:31px;height:31px;color:#2468ff;stroke-width:1.8;fill:none;"><use href="#wand"/></svg>
<span class="t" id="genagent" style="left:744.3px;top:1880px;font-size:24.5px;color:#2468ff;letter-spacing:0.535px;">Generate Agent</span>
<svg class="i" style="left:1719.6px;top:1875.7px;width:33px;height:33px;color:#6a6a6a;stroke-width:1.7;fill:none;"><use href="#note"/></svg>
<div class="b" style="left:1764.0px;top:1876.5px;width:2.0px;height:31.5px;background:#dedede;"></div>
<div class="b" style="left:1770.0px;top:1868.0px;width:47.6px;height:47.5px;background:#e9e9e9;border-radius:9px;"></div>
<svg class="i" style="left:1776.7px;top:1875.7px;width:33px;height:33px;color:#6a6a6a;stroke-width:1.7;fill:none;"><use href="#pointer"/></svg>
<svg class="i" style="left:1827.5px;top:1875.7px;width:33px;height:33px;color:#6a6a6a;stroke-width:1.7;fill:none;"><use href="#move"/></svg>
<div class="b" style="left:1871.8px;top:1876.5px;width:2.0px;height:31.5px;background:#dedede;"></div>
<svg class="i" style="left:1885.4px;top:1875.3px;width:33px;height:33px;color:#6a6a6a;stroke-width:1.7;fill:none;"><use href="#tree"/></svg>
<svg class="i" style="left:1935.7px;top:1875.7px;width:33px;height:33px;color:#6a6a6a;stroke-width:1.7;fill:none;"><use href="#trash"/></svg>
<div class="b" style="left:1979.7px;top:1876.5px;width:2.0px;height:31.5px;background:#dedede;"></div>
<svg class="i" style="left:1993.4px;top:1875.7px;width:33px;height:33px;color:#6a6a6a;stroke-width:1.7;fill:none;"><use href="#home"/></svg>
<div class="b" style="left:2038.3px;top:1876.5px;width:2.0px;height:31.5px;background:#dedede;"></div>
<svg class="i" style="left:2051.5px;top:1875.7px;width:33px;height:33px;color:#6a6a6a;stroke-width:1.7;fill:none;"><use href="#minus"/></svg>
<span class="t" id="zoom" style="left:2104.5px;top:1882px;font-size:22px;color:#6a6a6a;letter-spacing:1.816px;">100%</span>
<svg class="i" style="left:2187.7px;top:1875.7px;width:33px;height:33px;color:#6a6a6a;stroke-width:1.7;fill:none;"><use href="#plus"/></svg>
<div class="b" style="left:2964.0px;top:402.0px;width:2.0px;height:1458.0px;background:#eeeeee;"></div>
<div class="b" style="left:2966.0px;top:402.0px;width:28.0px;height:1458.0px;background:#fafafa;"></div>
<div class="b" style="left:2972.3px;top:408.0px;width:15.3px;height:1462.0px;background:#c2c2c2;border-radius:8px;"></div>
<div class="b" style="left:2260.0px;top:434.0px;width:80.0px;height:80.0px;background:#0468ff;border-radius:13px;"></div>
<svg class="i" style="left:2281.0px;top:454.8px;width:38px;height:38px;color:#fff;stroke-width:1.7;fill:none;"><use href="#fork"/></svg>
<span class="t" id="r_logic" style="left:2355.8px;top:445px;font-size:27.5px;font-weight:700;-webkit-text-stroke:0;color:#1d1d1d;letter-spacing:0.111px;">Logic</span>
<span class="t" id="r_sub" style="left:2355.9px;top:478px;font-size:24.5px;color:#6b6b6b;letter-spacing:0.546px;">Dynamically choose the next step</span>
<span class="t" id="r_ctx" style="left:2260.1px;top:566px;font-size:24.5px;color:#2a2a2a;letter-spacing:0.659px;">Context</span>
<div class="b" style="left:2259.5px;top:609.3px;width:681.0px;height:320.7px;background:#e8e8e8;border:2.500px solid #2b68ff;border-radius:17px;"></div>
<span class="t" id="m_l1" style="left:2275.0px;top:631px;font-size:25.5px;font-family:'Liberation Mono', monospace;color:#111;letter-spacing:-0.943px;">Analyze <span class="v">{{comment}}</span> to determine if the</span>
<span class="t" id="m_l2" style="left:2275.0px;top:666px;font-size:25.5px;font-family:'Liberation Mono', monospace;color:#111;letter-spacing:-0.943px;">comment is positive or negative.</span>
<div class="b" style="left:2734.3px;top:660.8px;width:13.7px;height:34.8px;background:#0a0a0a;"></div>
<span class="t" id="r_h1" style="left:2260.1px;top:944px;font-size:24.5px;color:#6b6b6b;letter-spacing:0.539px;">Provide any context that will be helpful in evaluating which</span>
<span class="t" id="r_h2" style="left:2260.1px;top:980px;font-size:24.5px;color:#6b6b6b;letter-spacing:0.547px;">condition is the most true.</span>
<span class="t" id="r_conds" style="left:2260.0px;top:1068px;font-size:27.5px;font-weight:700;-webkit-text-stroke:0;color:#1d1d1d;letter-spacing:0.255px;">Conditions</span>
<span class="t" id="r_c1" style="left:2260.1px;top:1124px;font-size:24.5px;color:#2a2a2a;letter-spacing:0.310px;">Condition #1</span>
<div class="b" style="left:2260.0px;top:1168.5px;width:680.0px;height:265.1px;background:#e8e8e8;border-radius:18px;"></div>
<div class="b" style="left:2261.0px;top:1370.2px;width:678.0px;height:2.0px;background:#d6d6d6;"></div>
<span class="t" id="m_c1" style="left:2275.0px;top:1189px;font-size:25.5px;font-family:'Liberation Mono', monospace;color:#111;letter-spacing:-0.943px;"><span class="v">{{comment}}</span> is positive</span>
<svg class="i" style="left:2272.8px;top:1384.7px;width:34px;height:34px;color:#2468ff;stroke-width:1.7;fill:none;"><use href="#c-dot"/></svg>
<span class="t" id="r_jump" style="left:2311.9px;top:1390px;font-size:24.5px;color:#2468ff;letter-spacing:1.157px;">Jump</span>
<span class="t" id="r_c2" style="left:2260.1px;top:1466px;font-size:24.5px;color:#2a2a2a;letter-spacing:0.665px;">Condition #2</span>
<div class="b" style="left:2260.0px;top:1508.9px;width:680.0px;height:263.9px;background:#e8e8e8;border-radius:18px;"></div>
<div class="b" style="left:2261.0px;top:1710.0px;width:678.0px;height:2.0px;background:#d6d6d6;"></div>
<span class="t" id="m_c2" style="left:2275.0px;top:1529px;font-size:25.5px;font-family:'Liberation Mono', monospace;color:#111;letter-spacing:-0.943px;"><span class="v">{{comment}}</span> is negative</span>
<svg class="i" style="left:2274.3px;top:1725.7px;width:34px;height:34px;color:#2468ff;stroke-width:1.7;fill:none;"><use href="#arrow-ur"/></svg>
<span class="t" id="r_seldest" style="left:2309.8px;top:1732px;font-size:24.5px;color:#2468ff;letter-spacing:0.436px;">Select Destination</span>
<div class="b" style="left:2260.0px;top:1802.3px;width:278.0px;height:77.7px;background:#e8e8e8;border-radius:16px;"></div>
<svg class="i" style="left:2286.2px;top:1818.1px;width:32px;height:32px;color:#2468ff;stroke-width:1.75;fill:none;"><use href="#plus"/></svg>
<span class="t" id="r_addc" style="left:2325.8px;top:1821px;font-size:26.5px;font-weight:700;-webkit-text-stroke:0;color:#2468ff;letter-spacing:-0.465px;">Add Condition</span>
<div class="b" style="left:2236.0px;top:1862.0px;width:758.0px;height:61.5px;background:#f6f6f6;"></div>
<svg class="i" style="left:2249.6px;top:1877.9px;width:30px;height:30px;color:#222;stroke-width:1.6;fill:none;"><use href="#play"/></svg>
<span class="t" id="r_test" style="left:2284.4px;top:1880px;font-size:24.5px;color:#2a2a2a;letter-spacing:0.626px;">Test Block</span>
</div></div>
</body>
</html>
